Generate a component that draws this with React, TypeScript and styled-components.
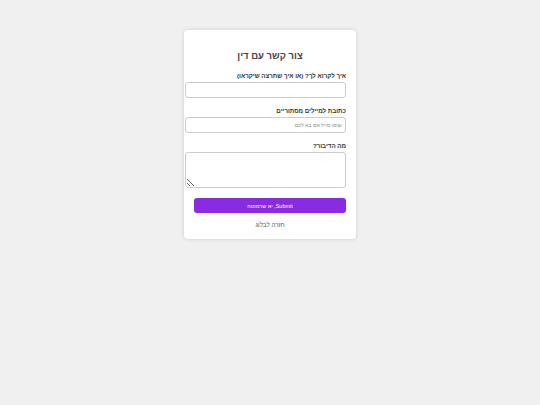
import styled, { createGlobalStyle } from 'styled-components'

const Global = createGlobalStyle`
  html, body {
    margin: 0;
    padding: 0;
    background: #f0f0f0;
    font-family: "Liberation Sans", Arial, sans-serif;
  }
`

const Page = styled.div`
  width: 540px;
  height: 405px;
  display: flex;
  justify-content: center;
  align-items: flex-start;
  padding-top: 30px;
  box-sizing: border-box;
`

const Card = styled.form`
  direction: rtl;
  width: 152px;
  padding: 10px 10px 10px;
  background: #fff;
  border-radius: 4px;
  box-shadow: 0 0 4px rgba(0, 0, 0, 0.15);
  display: flex;
  flex-direction: column;
`

const Title = styled.h2`
  margin: 10px 0 9px;
  text-align: center;
  font-size: 9.5px;
  line-height: 12px;
  font-weight: bold;
  color: #444;
`

const Label = styled.label`
  display: block;
  font-size: 6.2px;
  line-height: 9px;
  font-weight: bold;
  color: #333;
  margin-bottom: 2px;
`

const Input = styled.input`
  display: block;
  width: 100%;
  height: 14px;
  padding: 0 3.5px;
  border: 1px solid #ccc;
  border-radius: 3px;
  box-sizing: content-box;
  font-family: inherit;
  font-size: 5.2px;
  margin: 0 0 8px;
  outline: none;
  direction: rtl;
  &::placeholder {
    color: #888;
  }
`

const TextArea = styled.textarea`
  display: block;
  width: 100%;
  height: 34px;
  padding: 0 3.5px;
  border: 1px solid #ccc;
  border-radius: 3px;
  box-sizing: content-box;
  font-family: inherit;
  margin: 0 0 10px;
  outline: none;
  resize: vertical;
`

const Button = styled.button`
  width: 100%;
  height: 15px;
  border: none;
  border-radius: 3px;
  background: #8a2be2;
  color: #fff;
  font-family: inherit;
  font-size: 5.5px;
  padding: 0;
  cursor: pointer;
`

const BackLink = styled.a`
  display: block;
  margin-top: 7px;
  text-align: center;
  font-size: 6.2px;
  line-height: 9px;
  color: #555;
  text-decoration: none;
`

export default function App() {
  return (
    <>
      <Global />
      <Page>
        <Card onSubmit={(e) => e.preventDefault()}>
          <Title>צור קשר עם דין</Title>
          <Label>איך לקרוא לך? (או איך שתרצה שיקראו)</Label>
          <Input type="text" />
          <Label>כתובת למיילים מסתוריים</Label>
          <Input type="email" placeholder="שימו מייל אם בא לכם" />
          <Label>מה הדיבור?</Label>
          <TextArea />
          <Button type="submit">Submit, יא שרמוטה</Button>
          <BackLink href="#">חזרה לבלוג</BackLink>
        </Card>
      </Page>
    </>
  )
}
